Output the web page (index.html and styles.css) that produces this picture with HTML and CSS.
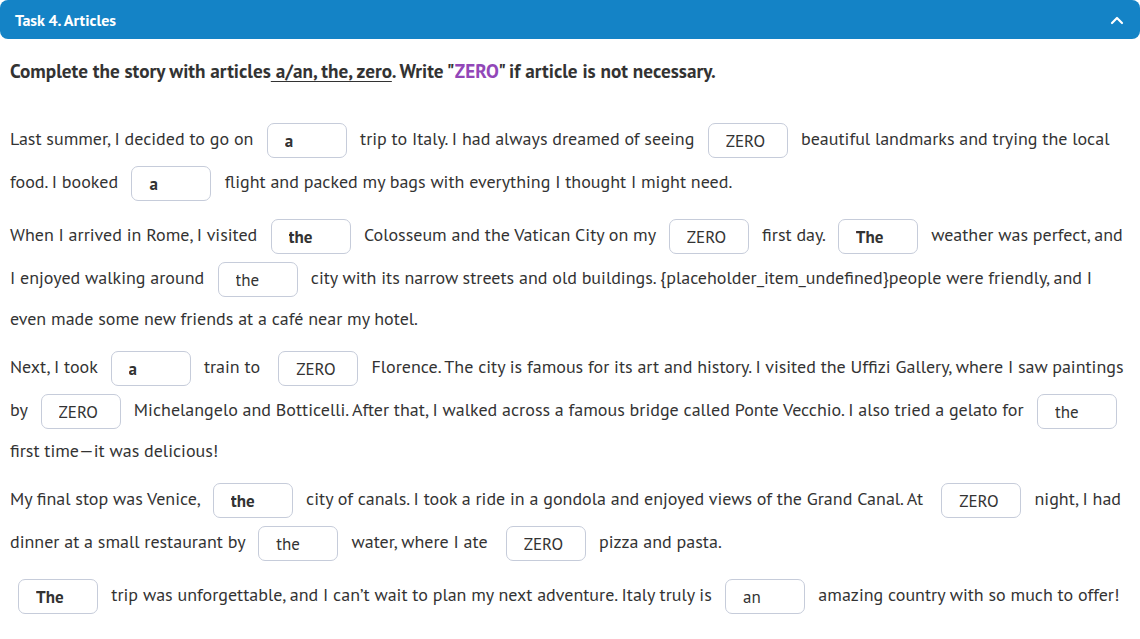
FILE: index.html
```html
<!DOCTYPE html>
<html lang="en">
<head>
<meta charset="utf-8">
<title>Task 4. Articles</title>
<link rel="stylesheet" href="styles.css">
</head>
<body>
<div class="task">
  <div class="task-header">
    <span class="task-title">Task 4. Articles</span>
    <svg class="chevron" width="14" height="10" viewBox="0 0 14 10"><polyline points="2,8 7,3 12,8" fill="none" stroke="#fff" stroke-width="2.2" stroke-linecap="round" stroke-linejoin="round"/></svg>
  </div>
  <div class="task-body">
    <p class="instruction">Complete the story with articles<u> a/an, the, zero</u>. Write "<span class="zero">ZERO</span>" if article is not necessary.</p>
    <div class="story">
      <p>Last summer, I decided to go on <input class="gap given" value="a"> trip to Italy. I had always dreamed of seeing <input class="gap" value="ZERO"> beautiful landmarks and trying the local food. I booked <input class="gap given" value="a"> flight and packed my bags with everything I thought I might need.</p>
      <p>When I arrived in Rome, I visited <input class="gap given" value="the"> Colosseum and the Vatican City on my <input class="gap" value="ZERO"> first day. <input class="gap given" value="The"> weather was perfect, and I enjoyed walking around <input class="gap" value="the"> city with its narrow streets and old buildings. {placeholder_item_undefined}people were friendly, and I even made some new friends at a café near my hotel.</p>
      <p>Next, I took <input class="gap given" value="a"> train to&nbsp; <input class="gap" value="ZERO"> Florence. The city is famous for its art and history. I visited the Uffizi Gallery, where I saw paintings by <input class="gap" value="ZERO"> Michelangelo and Botticelli. After that, I walked across a famous bridge called Ponte Vecchio. I also tried a gelato for <input class="gap" value="the"> first time—it was delicious!</p>
      <p>My final stop was Venice, <input class="gap given" value="the"> city of canals. I took a ride in a gondola and enjoyed views of the Grand Canal. At&nbsp; <input class="gap" value="ZERO"> night, I had dinner at a small restaurant by <input class="gap" value="the"> water, where I ate&nbsp; <input class="gap" value="ZERO"> pizza and pasta.</p>
      <p><input class="gap given first" value="The"> trip was unforgettable, and I can’t wait to plan my next adventure. Italy truly is <input class="gap" value="an"> amazing country with so much to offer!</p>
    </div>
  </div>
</div>
</body>
</html>
```
FILE: styles.css
```css
html, body {
  margin: 0;
  padding: 0;
  background: #ffffff;
}
body {
  font-family: "PT Sans", "Lato", "Noto Sans", sans-serif;
  font-size: 18px;
  color: #333333;
}
.task-header {
  height: 39px;
  background: #1483c6;
  border-radius: 8px;
  display: flex;
  align-items: center;
  justify-content: space-between;
  padding: 0 16px 0 15px;
}
.task-title {
  color: #ffffff;
  font-weight: 700;
  font-size: 16px;
}
.chevron {
  display: block;
}
.task-body {
  padding: 0 10px;
}
.instruction {
  margin: 20px 0 36px;
  font-size: 19.2px;
  font-weight: 700;
  line-height: 24px;
}
.instruction u {
  text-decoration-thickness: 1px;
  text-underline-offset: 3px;
}
.zero {
  color: #9247b8;
}
.story p {
  margin: 0 0 10px;
  line-height: 36px;
}
.gap {
  box-sizing: border-box;
  width: 80px;
  height: 35px;
  margin: 4px 8.5px;
  padding: 0 0 0 17px;
  border: 1px solid #c6ccda;
  border-radius: 7px;
  background: #ffffff;
  font-family: inherit;
  font-size: 17px;
  color: #333333;
  vertical-align: middle;
  outline: none;
}
.gap.first {
  margin-left: 8px;
}
.gap.given {
  font-weight: 700;
}
```
